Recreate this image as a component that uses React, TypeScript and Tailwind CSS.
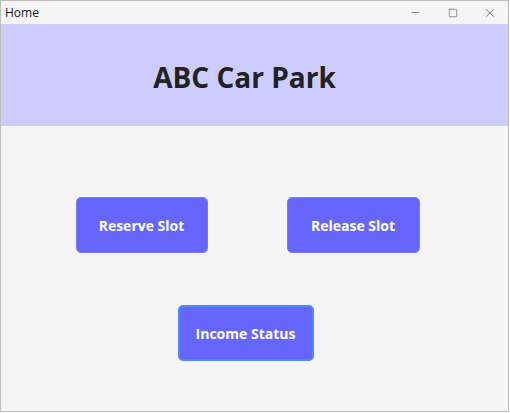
import { Minus, Square, X } from "lucide-react";

const font = { fontFamily: '"Open Sans", "Noto Sans", sans-serif' };

const Btn = ({ label, focused }: { label: string; focused?: boolean }) => (
  <button
    className={
      "h-[56px] rounded-[5px] bg-[#6666ff] text-[14px] font-bold text-white " +
      (focused ? "border-2 border-[#4a8cff]" : "border border-[#7a7aff]")
    }
  >
    {label}
  </button>
);

const App = () => {
  return (
    <div className="h-[413px] w-[510px] bg-white" style={font}>
      <div className="flex h-[412px] w-[509px] flex-col border border-[#bdbdbd] bg-[#f5f5f5]">
        {/* title bar */}
        <div className="flex h-[23px] items-center justify-between bg-[#f5f5f5] pl-[4px]">
          <span className="text-[12px] text-[#1a1a1a]">Home</span>
          <div className="flex items-center text-[#333]">
            <div className="flex w-[37px] justify-center">
              <Minus size={13} strokeWidth={1} />
            </div>
            <div className="flex w-[37px] justify-center">
              <Square size={10} strokeWidth={1.2} />
            </div>
            <div className="flex w-[37px] justify-center">
              <X size={14} strokeWidth={1} />
            </div>
          </div>
        </div>

        {/* header */}
        <div className="flex h-[102px] items-center justify-center bg-[#ccccff] pr-[20px] pt-[3px]">
          <h1 className="text-[28px] font-bold text-[#222]">ABC Car Park</h1>
        </div>

        {/* buttons */}
        <div className="flex flex-col items-center pt-[71px]">
          <div className="flex gap-[79px] pr-[14px]">
            <div className="grid w-[132px]">
              <Btn label="Reserve Slot" />
            </div>
            <div className="grid w-[133px]">
              <Btn label="Release Slot" />
            </div>
          </div>
          <div className="mt-[52px] grid w-[136px] pr-[18px] box-content">
            <div className="grid h-[59px]">
              <Btn label="Income Status" focused />
            </div>
          </div>
        </div>
      </div>
    </div>
  );
};

export default App;
